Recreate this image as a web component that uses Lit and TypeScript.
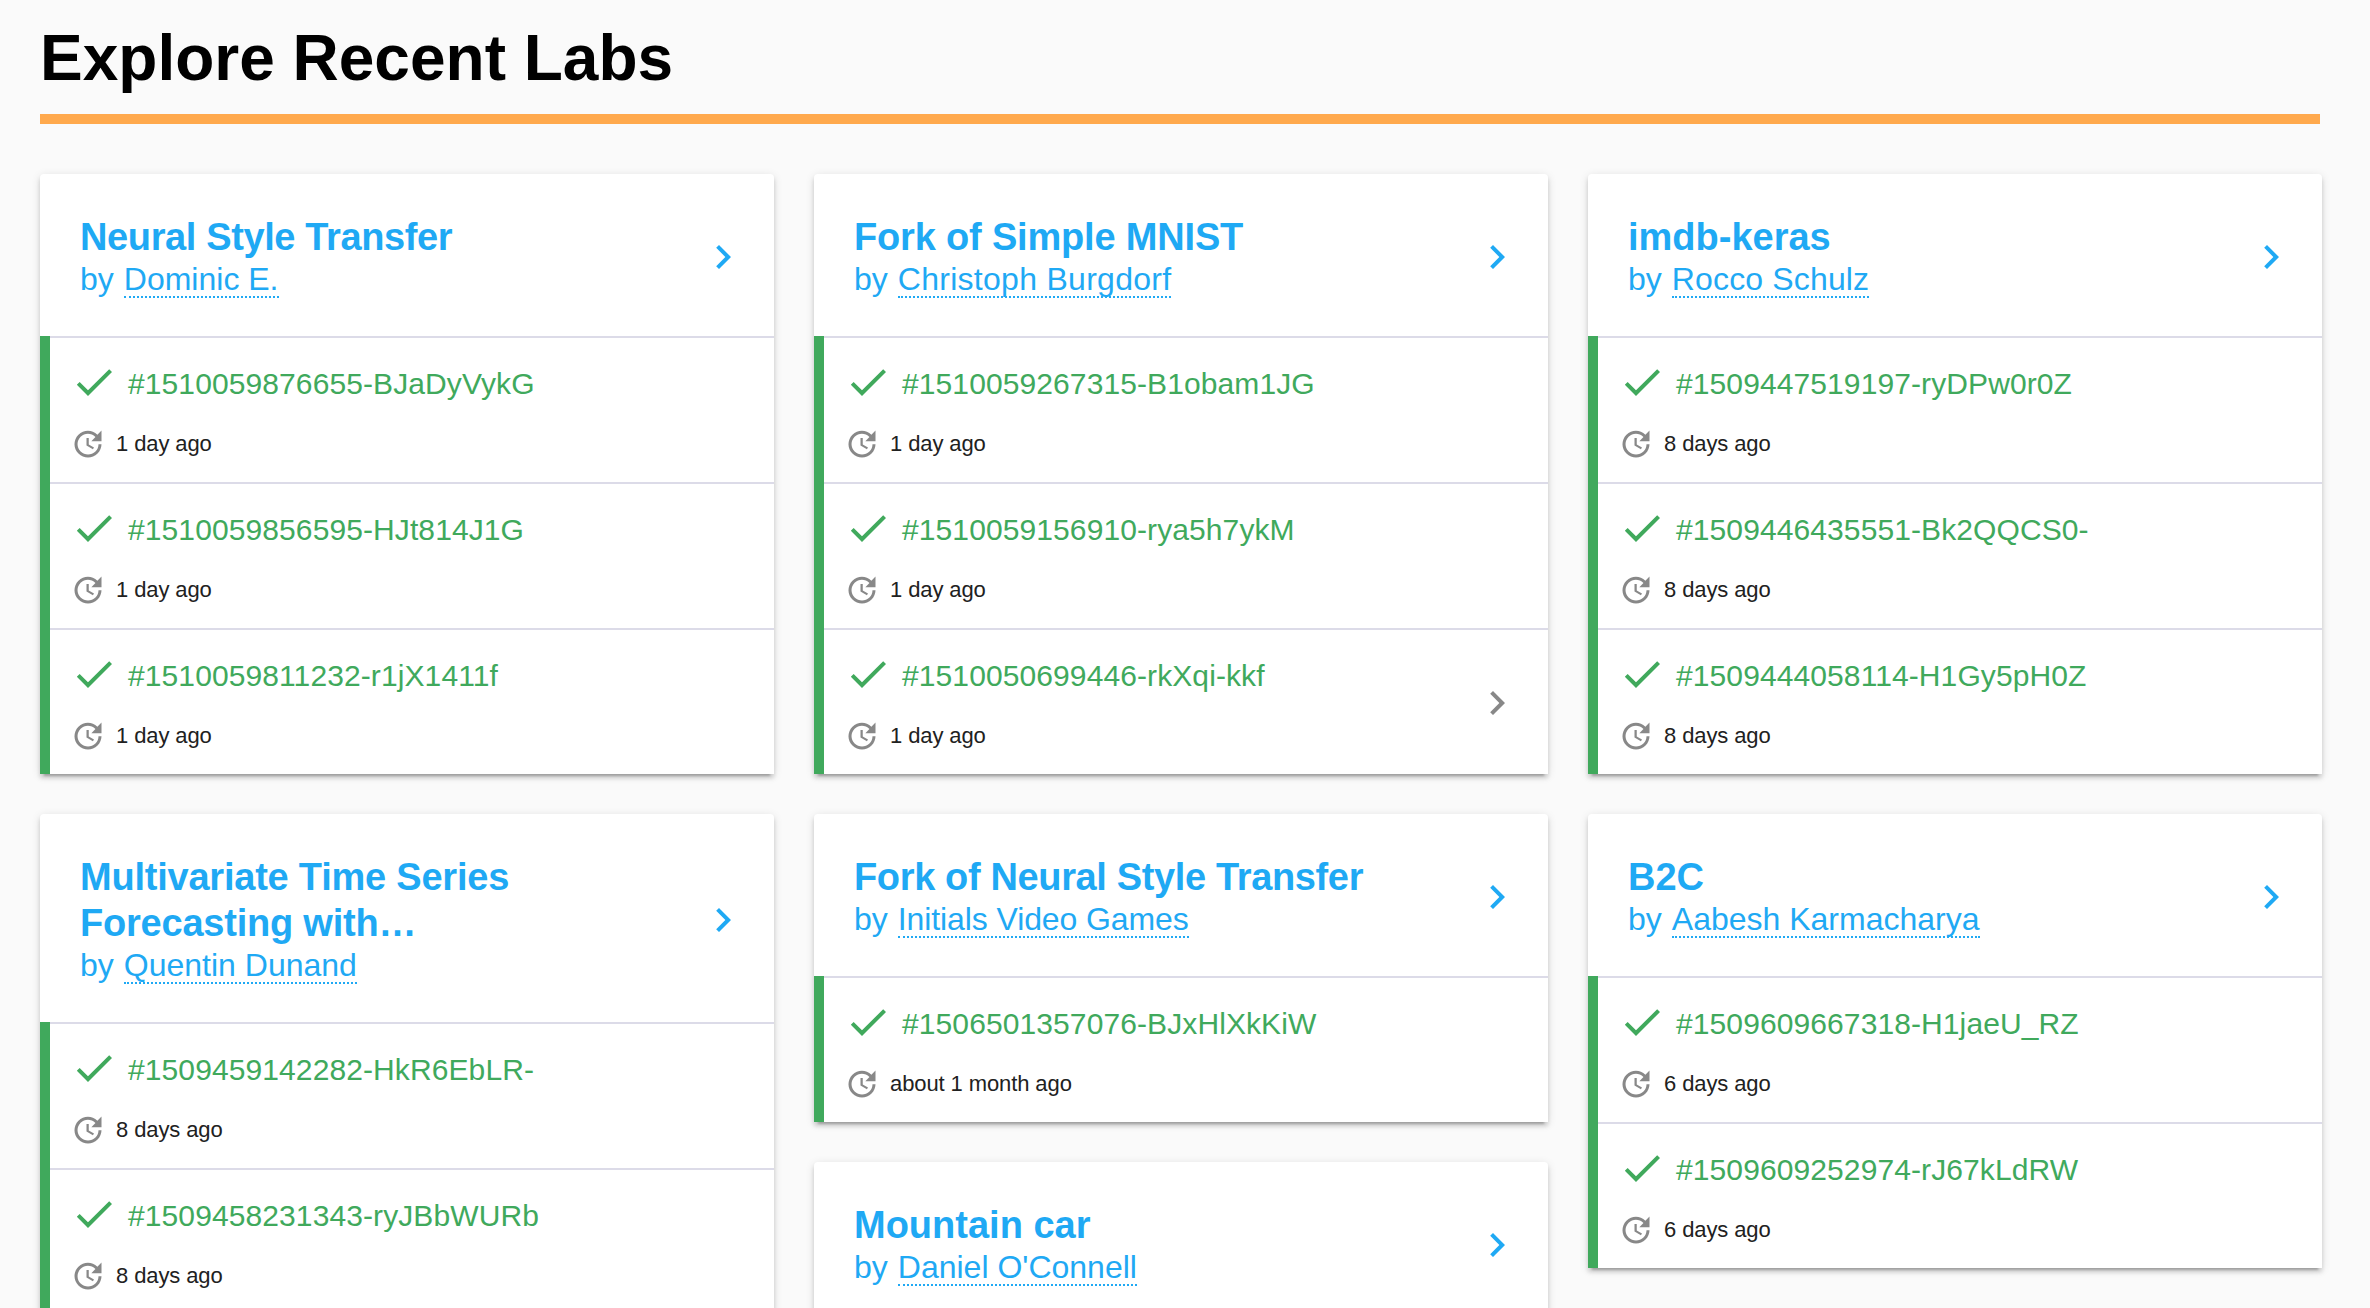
import { LitElement, html, css, svg } from "lit";
import { customElement, property } from "lit/decorators.js";
import { styleMap } from "lit/directives/style-map.js";

interface Run {
  id: string;
  time: string;
  active?: boolean;
}

interface Lab {
  title: string;
  author: string;
  runs: Run[];
  titleTracking?: number;
  authorTracking?: number;
}

const COLUMNS: Lab[][] = [
  [
    {
      title: "Neural Style Transfer",
      titleTracking: -0.38,
      author: "Dominic E.",
      runs: [
        { id: "#1510059876655-BJaDyVykG", time: "1 day ago" },
        { id: "#1510059856595-HJt814J1G", time: "1 day ago" },
        { id: "#1510059811232-r1jX1411f", time: "1 day ago" },
      ],
    },
    {
      title: "Multivariate Time Series Forecasting with…",
      titleTracking: -0.22,
      author: "Quentin Dunand",
      runs: [
        { id: "#1509459142282-HkR6EbLR-", time: "8 days ago" },
        { id: "#1509458231343-ryJBbWURb", time: "8 days ago" },
      ],
    },
  ],
  [
    {
      title: "Fork of Simple MNIST",
      titleTracking: -0.18,
      author: "Christoph Burgdorf",
      authorTracking: 0.28,
      runs: [
        { id: "#1510059267315-B1obam1JG", time: "1 day ago" },
        { id: "#1510059156910-rya5h7ykM", time: "1 day ago" },
        { id: "#1510050699446-rkXqi-kkf", time: "1 day ago", active: true },
      ],
    },
    {
      title: "Fork of Neural Style Transfer",
      titleTracking: -0.36,
      author: "Initials Video Games",
      authorTracking: -0.1,
      runs: [{ id: "#1506501357076-BJxHlXkKiW", time: "about 1 month ago" }],
    },
    { title: "Mountain car", author: "Daniel O'Connell", runs: [] },
  ],
  [
    {
      title: "imdb-keras",
      author: "Rocco Schulz",
      authorTracking: 0.15,
      runs: [
        { id: "#1509447519197-ryDPw0r0Z", time: "8 days ago" },
        { id: "#1509446435551-Bk2QQCS0-", time: "8 days ago" },
        { id: "#1509444058114-H1Gy5pH0Z", time: "8 days ago" },
      ],
    },
    {
      title: "B2C",
      author: "Aabesh Karmacharya",
      runs: [
        { id: "#1509609667318-H1jaeU_RZ", time: "6 days ago" },
        { id: "#1509609252974-rJ67kLdRW", time: "6 days ago" },
      ],
    },
  ],
];

const ICONS = {
  chevron: svg`<path d="M10 6L8.59 7.41 13.17 12l-4.58 4.59L10 18l6-6z"/>`,
  check: svg`<path d="M9 16.17L4.83 12l-1.42 1.41L9 19 21 7l-1.41-1.41z"/>`,
  update: svg`<path d="M21 10.12h-6.78l2.74-2.82c-2.73-2.7-7.15-2.8-9.88-.1-2.73 2.71-2.73 7.08 0 9.79 2.73 2.71 7.15 2.71 9.88 0C18.32 15.65 19 14.08 19 12.1h2c0 1.98-.88 4.55-2.64 6.29-3.51 3.48-9.21 3.48-12.72 0-3.5-3.47-3.53-9.11-.02-12.58 3.51-3.47 9.14-3.47 12.65 0L21 3v7.12zM12.5 8v4.25l3.5 2.08-.72 1.21L11 13V8h1.5z"/>`,
};

const icon = (name: keyof typeof ICONS, cls: string) =>
  html`<svg class="icon ${cls}" viewBox="0 0 24 24" aria-hidden="true">${ICONS[name]}</svg>`;

const tracking = (px = 0) => styleMap({ letterSpacing: `${px}px` });

@customElement("lab-card")
export class LabCard extends LitElement {
  @property({ attribute: false }) lab!: Lab;

  static styles = css`
    :host {
      display: block;
      background: #fff;
      border-radius: 4px 4px 0 0;
      box-shadow: 0 4px 4px rgba(0, 0, 0, 0.14), 0 6px 2px -4px rgba(0, 0, 0, 0.2),
        0 2px 10px rgba(0, 0, 0, 0.12);
    }
    .icon {
      display: block;
      flex: none;
      fill: currentColor;
    }
    .header {
      display: flex;
      align-items: center;
      justify-content: space-between;
      padding: 40px 27px 40px 40px;
      color: #1fa9f4;
    }
    .heading {
      width: 540px;
      flex: none;
    }
    .title {
      max-width: 530px;
      margin: 0;
      font-size: 38px;
      font-weight: 700;
      line-height: 46px;
      text-wrap: balance;
    }
    .by {
      display: flex;
      align-items: baseline;
      gap: 10px;
      box-sizing: border-box;
      height: 36px;
      padding-top: 1px;
      font-size: 32px;
      line-height: 36px;
    }
    .author {
      line-height: 34px;
      border-bottom: 2px dotted currentColor;
    }
    .chevron {
      width: 48px;
      height: 48px;
      margin-top: 4px;
    }
    .run {
      display: flex;
      align-items: center;
      justify-content: space-between;
      box-sizing: border-box;
      height: 146px;
      padding-right: 27px;
      background: linear-gradient(#dcdbe8, #dcdbe8) 10px 0 / 100% 2px no-repeat;
      background-origin: border-box;
      border-left: 10px solid #40a95c;
    }
    .info {
      padding: 2px 0 0 20px;
    }
    .name {
      display: flex;
      align-items: center;
      gap: 10px;
      height: 48px;
      color: #40a95c;
      font-size: 30px;
      letter-spacing: 0.1px;
    }
    .id {
      padding-top: 4px;
    }
    .time {
      display: flex;
      align-items: center;
      gap: 10px;
      height: 36px;
      margin-top: 20px;
      color: #212121;
      font-size: 22px;
      letter-spacing: -0.1px;
    }
    .check {
      width: 48px;
      height: 48px;
    }
    .update {
      width: 36px;
      height: 36px;
      color: #888;
    }
    .muted {
      color: #888;
    }
  `;

  render() {
    const { title, author, runs, titleTracking, authorTracking } = this.lab;
    return html`
      <header class="header">
        <div class="heading">
          <h2 class="title" style=${tracking(titleTracking)}>${title}</h2>
          <div class="by">
            <span>by</span>
            <span class="author" style=${tracking(authorTracking)}>${author}</span>
          </div>
        </div>
        ${icon("chevron", "chevron")}
      </header>
      ${runs.map(
        (run) => html`
          <div class="run">
            <div class="info">
              <div class="name">${icon("check", "check")}<span class="id">${run.id}</span></div>
              <div class="time">${icon("update", "update")}<span>${run.time}</span></div>
            </div>
            ${run.active ? icon("chevron", "chevron muted") : ""}
          </div>
        `
      )}
    `;
  }
}

@customElement("app-root")
export class AppRoot extends LitElement {
  static styles = css`
    :host {
      display: block;
      box-sizing: border-box;
      height: 1308px;
      overflow: hidden;
      padding: 0 48px 0 40px;
      background: #fafafa;
      font-family: "Liberation Sans", Arial, sans-serif;
    }
    .page-title {
      box-sizing: border-box;
      width: 2280px;
      height: 124px;
      margin: 0 0 50px;
      padding-top: 21px;
      border-bottom: 10px solid #ffa94d;
      color: #000;
      font-size: 64px;
      font-weight: 700;
      line-height: 74px;
    }
    .columns {
      display: grid;
      grid-template-columns: repeat(3, 734px);
      gap: 40px;
      align-items: start;
    }
    .column {
      display: flex;
      flex-direction: column;
      gap: 40px;
    }
  `;

  render() {
    return html`
      <h1 class="page-title">Explore Recent Labs</h1>
      <main class="columns">
        ${COLUMNS.map(
          (labs) => html`<div class="column">${labs.map((lab) => html`<lab-card .lab=${lab}></lab-card>`)}</div>`
        )}
      </main>
    `;
  }
}
